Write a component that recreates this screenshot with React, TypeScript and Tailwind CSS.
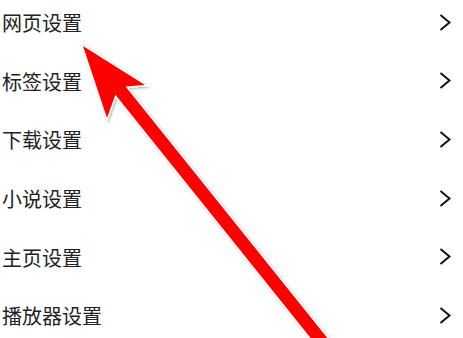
import React from 'react';

const items = ['网页设置', '标签设置', '下载设置', '小说设置', '主页设置', '播放器设置'];

const Chevron: React.FC = () => (
  <svg width="12" height="17" viewBox="0 0 12 17" className="shrink-0">
    <polyline points="1.5,1 10.5,8.5 1.5,16" fill="none" stroke="#111" strokeWidth="2" strokeLinejoin="miter" />
  </svg>
);

// big red pointer arrow drawn over the list
const Arrow: React.FC = () => {
  // shaft centre line: c(t) = (128,100) + t*(0.626,0.780), half width 6.5
  const c = (t: number) => [128 + 0.626 * t, 100 + 0.78 * t];
  const off = [5.07, -4.07];
  const r = (t: number) => { const p = c(t); return `${p[0] + off[0]},${p[1] + off[1]}`; };
  const l = (t: number) => { const p = c(t); return `${p[0] - off[0]},${p[1] - off[1]}`; };
  const pts = ['83,46', '145,85', r(-12), r(320), l(320), l(-12), '107,118'].join(' ');
  return (
    <svg className="absolute inset-0 pointer-events-none" width="463" height="338" viewBox="0 0 463 338">
      <defs>
        <filter id="sh" x="-20%" y="-20%" width="140%" height="140%">
          <feDropShadow dx="1" dy="1" stdDeviation="1.2" floodColor="#000" floodOpacity="0.35" />
        </filter>
      </defs>
      <polygon
        points={pts}
        fill="#ff0000"
        stroke="#ffffff"
        strokeWidth="3"
        strokeLinejoin="miter"
        paintOrder="stroke"
        filter="url(#sh)"
      />
    </svg>
  );
};

export default function App() {
  return (
    <div
      className="relative w-[463px] h-[338px] overflow-hidden bg-white"
      style={{ fontFamily: '"Noto Sans CJK SC", "Noto Sans", sans-serif' }}
    >
      <div className="-mt-[7px] flex flex-col">
        {items.map((name) => (
          <div key={name} className="h-[58.6px] flex items-center justify-between pl-[2px] pr-[12px]">
            <span className="text-[20px] leading-none text-[#222222] pt-[2px]">{name}</span>
            <Chevron />
          </div>
        ))}
      </div>
      <Arrow />
    </div>
  );
}
